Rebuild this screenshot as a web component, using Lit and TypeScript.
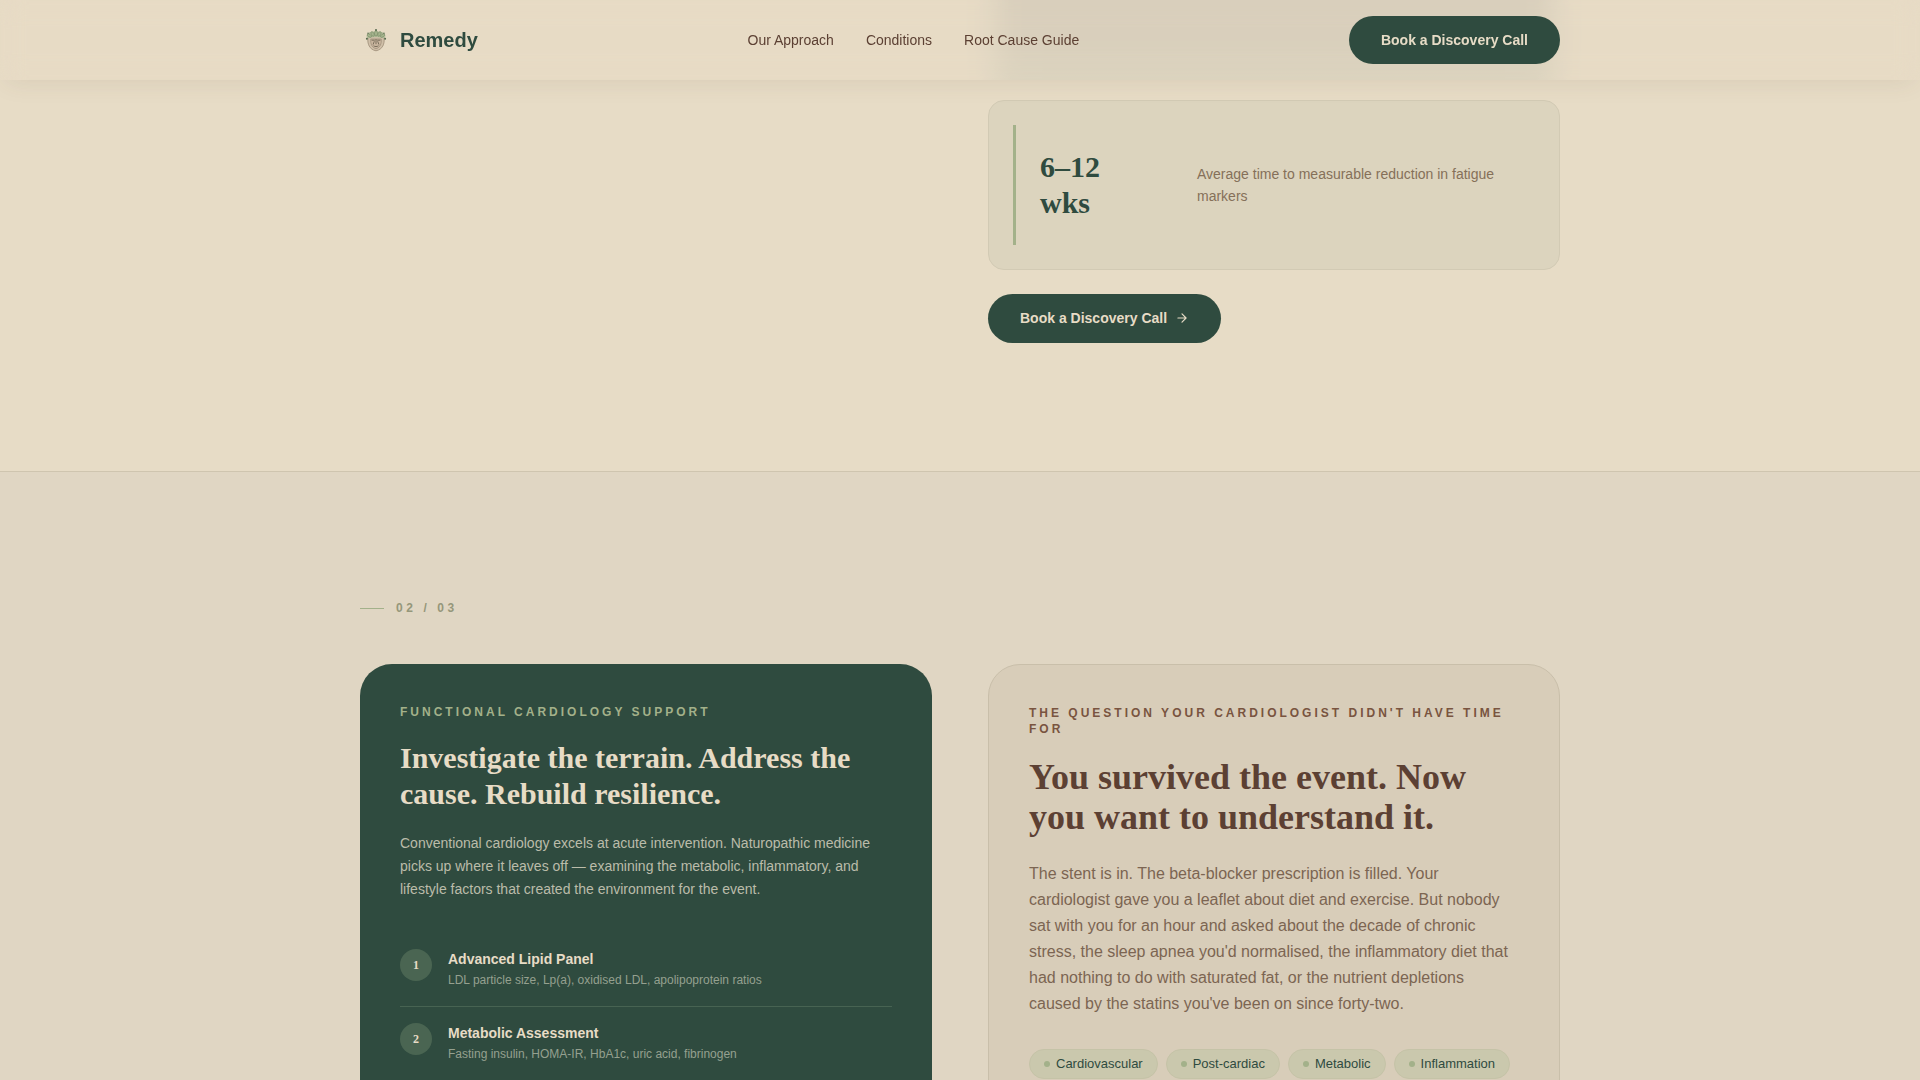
import { LitElement, html, css, svg } from "lit";
import { customElement } from "lit/decorators.js";

interface Step {
  title: string;
  detail: string;
}

const NAV_LINKS = ["Our Approach", "Conditions", "Root Cause Guide"];

const STEPS: Step[] = [
  { title: "Advanced Lipid Panel", detail: "LDL particle size, Lp(a), oxidised LDL, apolipoprotein ratios" },
  { title: "Metabolic Assessment", detail: "Fasting insulin, HOMA-IR, HbA1c, uric acid, fibrinogen" },
];

const TAGS = ["Cardiovascular", "Post-cardiac", "Metabolic", "Inflammation"];

const crest = svg`
  <path d="M4 9.500c-.9 6.500 1.500 12 8 13.300 6.500-1.300 8.900-6.800 8-13.300-4-2-12-2-16 0Z" fill="#cfbfa8" stroke="#a3927d" stroke-width=".9"/>
  <path d="M6.800 11c-.5 5 1.200 8.500 5.200 9.800 4-1.300 5.700-4.800 5.200-9.800Z" fill="#cbb7a0" stroke="#9a8975" stroke-width=".7"/>
  <path d="M2.600 7.500 4.400 4.800 7.600 3.400 10.600 3.600 12 1.600 13.400 3.600 16.400 3.400 19.600 4.800 21.400 7.500 21 10.500 17.500 9.600 12 9 6.500 9.600 3 10.500Z" fill="#b1bb98"/>
  <g fill="#a5b48d" stroke="#71835f" stroke-width=".5">
    <ellipse cx="12" cy="5.400" rx="1.500" ry="2.700"/>
    <ellipse cx="8.600" cy="6" rx="1.400" ry="2.500" transform="rotate(-28 8.600 6)"/>
    <ellipse cx="15.400" cy="6" rx="1.400" ry="2.500" transform="rotate(28 15.400 6)"/>
    <ellipse cx="5.400" cy="7.600" rx="1.300" ry="2.400" transform="rotate(-55 5.400 7.600)"/>
    <ellipse cx="18.600" cy="7.600" rx="1.300" ry="2.400" transform="rotate(55 18.600 7.600)"/>
  </g>
  <g fill="#56684d">
    <circle cx="12" cy="2" r="1"/>
    <circle cx="2.900" cy="10.800" r="1"/>
    <circle cx="21.100" cy="10.800" r="1"/>
    <circle cx="4" cy="5.200" r=".7"/>
    <circle cx="20" cy="5.200" r=".7"/>
  </g>
  <path d="M8 12.200h2.400M13.600 12.200H16M12 11.400v4.400M9.800 18c1.400.8 3 .8 4.400 0M10.200 13.600l-1 2.600M13.800 13.600l1 2.600" fill="none" stroke="#6f6554" stroke-width=".9" stroke-linecap="round"/>
`;

@customElement("app-root")
export class AppRoot extends LitElement {
  static styles = css`
    :host {
      --cream: #e7dcc6;
      --sand: #e0d6c3;
      --forest: #2f4b3f;
      --sage: #a3b18a;
      --bark: #5c4033;
      --sans: "Liberation Sans", Arial, sans-serif;
      --serif: "Liberation Serif", "Times New Roman", serif;
      display: block;
      height: 100vh;
      overflow: hidden;
      background: var(--cream);
      color: var(--bark);
      font-family: var(--sans);
      font-size: 14px;
    }
    * { box-sizing: border-box; }
    h2, h3, p, ol, ul { margin: 0; padding: 0; }
    ol, ul { list-style: none; }
    a { color: inherit; text-decoration: none; }

    .container {
      width: 100%;
      max-width: 1248px;
      margin: 0 auto;
      padding: 0 24px;
    }
    .columns {
      display: grid;
      grid-template-columns: 1fr 1fr;
      gap: 56px;
    }

    .header {
      position: fixed;
      inset: 0 0 auto;
      z-index: 2;
      background: rgba(231, 220, 198, 0.05);
      backdrop-filter: blur(12px);
      box-shadow: 0 8px 24px -6px rgba(92, 64, 51, 0.1);
    }
    .bar {
      display: flex;
      align-items: center;
      justify-content: space-between;
      height: 80px;
    }
    .brand {
      display: flex;
      align-items: center;
      gap: 8px;
      color: var(--forest);
      font-size: 20px;
      line-height: 28px;
      font-weight: 700;
    }
    .brand-mark { width: 32px; height: 32px; padding: 4px; }
    .nav { display: flex; gap: 32px; line-height: 20px; }

    .button {
      display: inline-flex;
      align-items: center;
      gap: 8px;
      padding: 14px 32px;
      border: 0;
      border-radius: 25px;
      background: var(--forest);
      color: var(--cream);
      font: 700 14px/20px var(--sans);
      cursor: pointer;
    }
    .arrow { width: 14px; height: 14px; }

    .first { padding-bottom: 128px; }
    .first .column { grid-column: 2; }
    .first .button { padding-bottom: 15px; }
    .panel-end {
      height: 80px;
      margin: 0 -12px 20px;
      background:
        linear-gradient(90deg, var(--cream), transparent 36px, transparent calc(100% - 36px), var(--cream)),
        linear-gradient(#d9cfbc 50%, #dcd4bf);
    }
    .stat {
      margin-bottom: 24px;
      padding: 24px;
      border: 1px solid #d2cab4;
      border-radius: 16px;
      background: #dcd4be;
    }
    .stat-body {
      display: grid;
      grid-template-columns: 1fr 2fr;
      align-items: center;
      padding: 24px;
      border-left: 3px solid var(--sage);
    }
    .stat-value {
      padding-right: 72px;
      color: var(--forest);
      font: 700 30px/36px var(--serif);
    }
    .stat-label { color: #857059; line-height: 22px; }

    .second {
      padding: 128px 0;
      border-top: 1px solid #cfc5af;
      background: var(--sand);
    }
    .counter {
      display: flex;
      align-items: center;
      gap: 12px;
      margin-bottom: 48px;
      color: #95977a;
      font-size: 12px;
      line-height: 16px;
      font-weight: 700;
      letter-spacing: 0.3em;
    }
    .counter::before {
      content: "";
      width: 24px;
      height: 1px;
      background: var(--sage);
    }
    .card { padding: 40px; border-radius: 32px; }
    .card-dark { background: var(--forest); color: var(--cream); }
    .card-light { border: 1px solid #c9bfaa; background: #d8cdb9; }
    .eyebrow {
      margin-bottom: 20px;
      font-size: 12px;
      line-height: 16px;
      font-weight: 700;
      letter-spacing: 3px;
      text-transform: uppercase;
    }
    .card-dark .eyebrow { color: var(--sage); }
    .card-light .eyebrow { color: #795440; }
    .card-dark .title { margin-bottom: 20px; font: 700 30px/36px var(--serif); }
    .card-light .title { margin-bottom: 24px; font: 700 36px/40px var(--serif); }
    .card-dark .text { margin-bottom: 32px; color: #bbbcaa; line-height: 23px; }
    .card-light .text {
      margin-bottom: 32px;
      color: #7c6552;
      font-size: 16px;
      line-height: 26px;
    }
    .step { display: flex; gap: 16px; padding: 16px 0; }
    .step + .step { border-top: 1px solid #476352; }
    .step-number {
      display: grid;
      place-items: center;
      width: 32px;
      height: 32px;
      border-radius: 50%;
      background: #4a6552;
      font: 700 12px/16px var(--serif);
    }
    .step-title { font-size: 14px; line-height: 21px; font-weight: 700; }
    .step-detail { color: #95a08f; font-size: 12px; line-height: 20px; }

    .tags { display: flex; flex-wrap: wrap; gap: 8px; }
    .tag {
      display: flex;
      align-items: center;
      gap: 6px;
      padding: 4px 14px;
      border: 1px solid #c5c3a7;
      border-radius: 16px;
      background: #cac8ad;
      color: var(--forest);
      font-size: 13px;
      line-height: 20px;
    }
    .tag::before {
      content: "";
      width: 6px;
      height: 6px;
      border-radius: 50%;
      background: var(--sage);
    }
  `;

  render() {
    return html`
      <header class="header">
        <div class="container bar">
          <a class="brand" href="#">
            <svg class="brand-mark" viewBox="0 0 24 24" aria-hidden="true">${crest}</svg>
            Remedy
          </a>
          <nav class="nav">${NAV_LINKS.map((label) => html`<a href="#">${label}</a>`)}</nav>
          <button class="button" type="button">Book a Discovery Call</button>
        </div>
      </header>

      <section class="first">
        <div class="container columns">
          <div class="column">
            <div class="panel-end"></div>
            <div class="stat">
              <div class="stat-body">
                <p class="stat-value">6–12 wks</p>
                <p class="stat-label">Average time to measurable reduction in fatigue markers</p>
              </div>
            </div>
            <button class="button" type="button">
              Book a Discovery Call
              <svg class="arrow" viewBox="0 0 24 24" fill="none" stroke="currentColor" stroke-width="2"
                stroke-linecap="round" stroke-linejoin="round" aria-hidden="true">
                <path d="M5 12h14M12 5l7 7-7 7" />
              </svg>
            </button>
          </div>
        </div>
      </section>

      <section class="second">
        <div class="container">
          <p class="counter">02 / 03</p>
          <div class="columns">
            <article class="card card-dark">
              <p class="eyebrow">Functional Cardiology Support</p>
              <h3 class="title">Investigate the terrain. Address the cause. Rebuild resilience.</h3>
              <p class="text">
                Conventional cardiology excels at acute intervention. Naturopathic medicine picks up
                where it leaves off — examining the metabolic, inflammatory, and lifestyle factors
                that created the environment for the event.
              </p>
              <ol>
                ${STEPS.map(
                  (step, i) => html`
                    <li class="step">
                      <span class="step-number">${i + 1}</span>
                      <div>
                        <p class="step-title">${step.title}</p>
                        <p class="step-detail">${step.detail}</p>
                      </div>
                    </li>
                  `
                )}
              </ol>
            </article>
            <article class="card card-light">
              <p class="eyebrow">The question your cardiologist didn't have time for</p>
              <h2 class="title">You survived the event. Now you want to understand it.</h2>
              <p class="text">
                The stent is in. The beta-blocker prescription is filled. Your cardiologist gave you
                a leaflet about diet and exercise. But nobody sat with you for an hour and asked
                about the decade of chronic stress, the sleep apnea you'd normalised, the
                inflammatory diet that had nothing to do with saturated fat, or the nutrient
                depletions caused by the statins you've been on since forty-two.
              </p>
              <ul class="tags">${TAGS.map((tag) => html`<li class="tag">${tag}</li>`)}</ul>
            </article>
          </div>
        </div>
      </section>
    `;
  }
}
